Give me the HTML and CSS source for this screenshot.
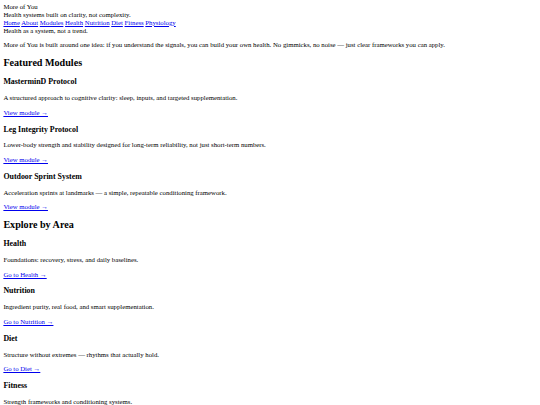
FILE: index.html
```html
<!DOCTYPE html>
<html lang="en">
<head>
<meta charset="utf-8">
<title>More of You</title>
<link rel="stylesheet" href="styles.css">
</head>
<body>
<header class="site-header">
  <div class="brand">More of You</div>
  <div class="tagline">Health systems built on clarity, not complexity.</div>
  <nav class="nav">
    <a href="#">Home</a>
    <a href="#">About</a>
    <a href="#">Modules</a>
    <a href="#">Health</a>
    <a href="#">Nutrition</a>
    <a href="#">Diet</a>
    <a href="#">Fitness</a>
    <a href="#">Physiology</a>
  </nav>
  <div class="motto">Health as a system, not a trend.</div>
</header>
<main>
  <p>More of You is built around one idea: if you understand the signals, you can build your own health. No gimmicks, no noise — just clear frameworks you can apply.</p>

  <section class="modules">
    <h2>Featured Modules</h2>
    <article>
      <h3>MasterminD Protocol</h3>
      <p>A structured approach to cognitive clarity: sleep, inputs, and targeted supplementation.</p>
      <p><a href="#">View module →</a></p>
    </article>
    <article>
      <h3>Leg Integrity Protocol</h3>
      <p>Lower-body strength and stability designed for long-term reliability, not just short-term numbers.</p>
      <p><a href="#">View module →</a></p>
    </article>
    <article>
      <h3>Outdoor Sprint System</h3>
      <p>Acceleration sprints at landmarks — a simple, repeatable conditioning framework.</p>
      <p><a href="#">View module →</a></p>
    </article>
  </section>

  <section class="areas">
    <h2>Explore by Area</h2>
    <article>
      <h3>Health</h3>
      <p>Foundations: recovery, stress, and daily baselines.</p>
      <p><a href="#">Go to Health →</a></p>
    </article>
    <article>
      <h3>Nutrition</h3>
      <p>Ingredient purity, real food, and smart supplementation.</p>
      <p><a href="#">Go to Nutrition →</a></p>
    </article>
    <article>
      <h3>Diet</h3>
      <p>Structure without extremes — rhythms that actually hold.</p>
      <p><a href="#">Go to Diet →</a></p>
    </article>
    <article>
      <h3>Fitness</h3>
      <p>Strength frameworks and conditioning systems.</p>
      <p><a href="#">Go to Fitness →</a></p>
    </article>
    <article>
      <h3>Physiology</h3>
      <p>How the body adapts, and how to read its signals.</p>
      <p><a href="#">Go to Physiology →</a></p>
    </article>
  </section>
</main>
</body>
</html>
```

FILE: styles.css
```css
html {
  font-size: 6.75px;
}

body {
  margin: 3.375px;
  font-family: "Liberation Serif", "Times New Roman", serif;
  font-size: 6.75px;
  line-height: 7.77px;
  color: #000;
  background: #fff;
}

a {
  color: #0000ee;
}

p {
  margin: 6.75px 0;
}

h2 {
  font-size: 10.125px;
  line-height: 11.64px;
  margin: 8.4px 0;
  font-weight: bold;
}

h3 {
  font-size: 7.9px;
  line-height: 9.08px;
  margin: 7.9px 0;
  font-weight: bold;
}
```
